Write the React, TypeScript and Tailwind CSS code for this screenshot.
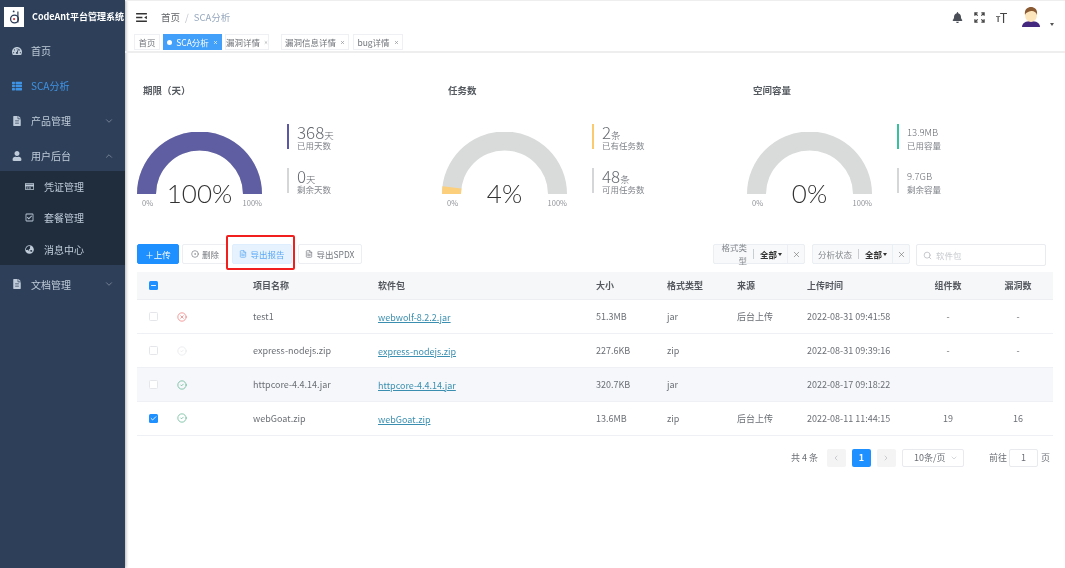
import type { ReactNode } from "react";
import { ChevronDown, ChevronUp, ChevronLeft, ChevronRight, CircleCheck, CircleX, CircleDot, FileText, Search, X, Check, Minus } from "lucide-react";
import { FaTachometerAlt, FaThList, FaFileAlt, FaUser, FaRegCreditCard, FaRegCheckSquare, FaGlobeAsia, FaBell } from "react-icons/fa";

const FONT = "font-['Noto_Sans_CJK_SC','Noto_Sans',sans-serif]";

function SideItem({ icon, label, active, arrow }: { icon: ReactNode; label: string; active?: boolean; arrow?: "up" | "down" }) {
  return (
    <div className={`flex h-[35px] items-center pl-3 text-[10px] ${active ? "text-[#3f93e6]" : "text-[#bfcbd9]"}`}>
      <span className="flex w-[19px] shrink-0 text-[10px]">{icon}</span>
      <span>{label}</span>
      {arrow === "down" && <ChevronDown className="ml-auto mr-[11px] size-[10px] text-[#7f8c9c]" />}
      {arrow === "up" && <ChevronUp className="ml-auto mr-[11px] size-[10px] text-[#7f8c9c]" />}
    </div>
  );
}

function SubItem({ icon, label }: { icon: ReactNode; label: string }) {
  return (
    <div className="flex h-[31.3px] items-center pl-[25px] text-[10px] text-[#bfcbd9]">
      <span className="flex w-[19px] shrink-0 text-[9px]">{icon}</span>
      <span>{label}</span>
    </div>
  );
}

function Sidebar() {
  return (
    <aside className="flex w-[125px] shrink-0 flex-col bg-[#2e4059] shadow-[1px_0_3px_rgba(0,0,0,0.3)]">
      <div className="flex h-[33px] items-center pl-1">
        <div className="flex size-5 items-center justify-center bg-white">
          <svg viewBox="0 0 20 20" className="size-[17px]">
            <circle cx="10" cy="13" r="4.6" fill="none" stroke="#2c3a55" strokeWidth="1.5" />
            <path d="M14 4v13" stroke="#2c3a55" strokeWidth="1.4" />
            <circle cx="9.5" cy="13" r="1.3" fill="#d9363e" />
            <circle cx="9" cy="4" r="1.1" fill="#2c3a55" />
          </svg>
        </div>
        <span className="ml-[8px] whitespace-nowrap text-[9px] font-bold text-white">CodeAnt平台管理系统</span>
      </div>
      <SideItem icon={<FaTachometerAlt />} label="首页" />
      <SideItem icon={<FaThList />} label="SCA分析" active />
      <SideItem icon={<FaFileAlt />} label="产品管理" arrow="down" />
      <SideItem icon={<FaUser />} label="用户后台" arrow="up" />
      <div className="-mt-[2px] bg-[#1f2d3d]">
        <SubItem icon={<FaRegCreditCard />} label="凭证管理" />
        <SubItem icon={<FaRegCheckSquare />} label="套餐管理" />
        <SubItem icon={<FaGlobeAsia />} label="消息中心" />
      </div>
      <div className="pt-[2px]">
        <SideItem icon={<FaFileAlt />} label="文档管理" arrow="down" />
      </div>
    </aside>
  );
}

function Header() {
  return (
    <header className="flex h-[33px] items-center border-t border-[#eeeeee] pl-[11px] pr-[11px]">
      <svg viewBox="0 0 12 10" className="h-[9px] w-[11px] text-[#333]">
        <path d="M0 .8h12M0 5h7M0 9.2h12" stroke="currentColor" strokeWidth="1.5" />
        <path d="M12 3 9 5l3 2z" fill="currentColor" />
      </svg>
      <span className="ml-[14px] text-[9.5px] text-[#606266]">首页</span>
      <span className="mx-[5px] text-[9.5px] text-[#c0c4cc]">/</span>
      <span className="text-[9.5px] text-[#97a8be]">SCA分析</span>
      <div className="ml-auto flex items-center">
        <FaBell className="size-[11px] text-[#4a4f57]" />
        <svg viewBox="0 0 12 12" className="ml-[11px] size-[11px] text-[#444]" fill="none" stroke="currentColor" strokeWidth="1.4">
          <path d="M1 4V1h3M1 1l3 3M8 1h3v3M11 1 8 4M1 8v3h3M1 11l3-3M8 11h3V8M11 11 8 8" />
        </svg>
        <svg viewBox="0 0 12 12" className="ml-[11px] size-[11px] text-[#444]" fill="currentColor">
          <path d="M4.5 1H12v1.2H8.9V12H7.6V2.2H4.5z" />
          <path d="M0 4.5h4.6v1H2.9V11H1.7V5.5H0z" />
        </svg>
        <svg viewBox="0 0 20 22" className="ml-[14px] h-[22px] w-5">
          <path d="M1 21c0-4 4-6 9-6s9 2 9 6z" fill="#44277f" />
          <ellipse cx="10" cy="9" rx="6" ry="7" fill="#fde5bb" />
          <path d="M4 9c-1-6 3-8 6-8s7 2 6 8c-1-3-3-4-5-4S5 6 4 9z" fill="#8a5a33" />
        </svg>
        <span className="ml-[9px] mt-[14px] h-0 w-0 border-x-[2.5px] border-t-[3px] border-x-transparent border-t-[#555]" />
      </div>
    </header>
  );
}

const tags = [
  { label: "首页", cls: "w-[26px] ml-[9px]" },
  { label: "SCA分析", cls: "w-[59px] ml-[3px]", active: true },
  { label: "漏洞详情", cls: "w-[44px] ml-[3px]", close: true },
  { label: "漏洞信息详情", cls: "w-[68px] ml-[12px]", close: true },
  { label: "bug详情", cls: "w-[50px] ml-[4px]", close: true },
];

function TagsBar() {
  return (
    <div className="flex h-[20px] items-start border-b-[2px] border-[#eeeeee] pt-[1px]">
      {tags.map((t) => (
        <div
          key={t.label}
          className={`flex h-[16px] items-center justify-center gap-[4px] whitespace-nowrap border text-[8.5px] ${t.cls} ${
            t.active ? "border-[#42a0fa] bg-[#42a0fa] text-white" : "border-[#eef0f3] bg-white text-[#707479]"
          }`}
        >
          {t.active && <span className="size-[5px] rounded-full bg-white" />}
          {t.label}
          {(t.active || t.close) && <X className={`size-[5px] ${t.active ? "text-white" : "text-[#8a8d92]"}`} strokeWidth={3} />}
        </div>
      ))}
    </div>
  );
}

function arcPath(pct: number) {
  const cx = 62.5;
  const cy = 62;
  const a = Math.PI * (1 - pct / 100);
  const ox = cx + 62.5 * Math.cos(a);
  const oy = cy - 62.5 * Math.sin(a);
  const ix = cx + 43.5 * Math.cos(a);
  const iy = cy - 43.5 * Math.sin(a);
  return `M0 ${cy}A62.5 62.5 0 0 1 ${ox} ${oy}L${ix} ${iy}A43.5 43.5 0 0 0 19 ${cy}Z`;
}

function Stat({ value, unit, label, color, small }: { value: string; unit?: string; label: string; color: string; small?: boolean }) {
  return (
    <div className={`h-[25px] border-l-2 pl-[8px] ${color}`}>
      <div className={`flex h-[15px] items-baseline whitespace-nowrap leading-[15px] text-[#666a70] ${small ? "text-[9.5px] font-light pt-[1px]" : "text-[17px] font-light"}`}>
        {value}
        {unit && <span className="text-[9.5px]">{unit}</span>}
      </div>
      <div className="mt-[1px] whitespace-nowrap text-[8.5px] leading-[10px] text-[#80848a]">{label}</div>
    </div>
  );
}

type GaugeProps = {
  title: string;
  pct: number;
  fill: string;
  barColor: string;
  used: { value: string; unit?: string; label: string };
  left: { value: string; unit?: string; label: string };
  small?: boolean;
};

function Gauge({ title, pct, fill, barColor, used, left, small }: GaugeProps) {
  return (
    <div className="w-[305px]">
      <div className="h-[12px] pl-[6px] text-[9.5px] font-bold leading-[12px] text-[#555a60]">{title}</div>
      <div className="mt-[28px] flex">
        <div className="relative w-[125px] pt-[8px]">
          <svg viewBox="0 0 125 62" className="h-[62px] w-[125px]">
            <path d={arcPath(100)} fill="#d9dbda" />
            {pct > 0 && <path d={arcPath(pct)} fill={fill} />}
          </svg>
          <div className="absolute left-0 right-0 top-[51px] text-center font-['Lato',sans-serif] text-[26px] font-light leading-[36px] text-[#333]">{pct}%</div>
          <div className="mt-[4px] flex justify-between px-[5px] text-[7.5px] leading-[10px] text-[#909399]">
            <span>0%</span>
            <span className="-mr-[5px]">100%</span>
          </div>
        </div>
        <div className="ml-[25px] flex flex-col gap-[19px]">
          <Stat {...used} color={barColor} small={small} />
          <Stat {...left} color="border-[#d5d6d8]" small={small} />
        </div>
      </div>
    </div>
  );
}

function ActionButton({ children, cls }: { children: ReactNode; cls: string }) {
  return <button className={`flex h-[20px] items-center justify-center gap-[3px] rounded-[2px] border text-[8.5px] ${cls}`}>{children}</button>;
}

function Filter({ label, cls }: { label: string; cls: string }) {
  return (
    <div className={`flex h-[20px] items-center rounded-[2px] border border-[#ebeef2] bg-[#f8f9fa] text-[8.5px] ${cls}`}>
      <span className="flex-1 pr-[6px] text-right text-[#84888e]">{label}</span>
      <span className="h-[10px] border-l border-[#c9ccd1]" />
      <span className="ml-[6px] font-bold text-[#333]">全部</span>
      <span className="ml-[1px] h-0 w-0 border-x-[2.5px] border-t-[3px] border-x-transparent border-t-[#333]" />
      <span className="ml-[5px] flex h-full w-[17px] items-center justify-center border-l border-[#ebeef2]">
        <X className="size-[9px] text-[#666]" strokeWidth={1.5} />
      </span>
    </div>
  );
}

const GRID = "grid grid-cols-[36px_80px_125px_218px_71px_70px_70px_106px_70px_70px] items-center";

type Row = {
  name: string;
  size: string;
  fmt: string;
  source: string;
  time: string;
  comps: string;
  vulns: string;
  status: "fail" | "idle" | "ok";
  checked?: boolean;
  hover?: boolean;
  h: string;
};

const rows: Row[] = [
  { name: "test1", pkg: "webwolf-8.2.2.jar", size: "51.3MB", fmt: "jar", source: "后台上传", time: "2022-08-31 09:41:58", comps: "-", vulns: "-", status: "fail", h: "h-[34px]" },
  { name: "express-nodejs.zip", pkg: "express-nodejs.zip", size: "227.6KB", fmt: "zip", source: "", time: "2022-08-31 09:39:16", comps: "-", vulns: "-", status: "idle", h: "h-[34px]" },
  { name: "httpcore-4.4.14.jar", pkg: "httpcore-4.4.14.jar", size: "320.7KB", fmt: "jar", source: "", time: "2022-08-17 09:18:22", comps: "", vulns: "", status: "ok", hover: true, h: "h-[34px]" },
  { name: "webGoat.zip", pkg: "webGoat.zip", size: "13.6MB", fmt: "zip", source: "后台上传", time: "2022-08-11 11:44:15", comps: "19", vulns: "16", status: "ok", checked: true, h: "h-[33.5px]" },
] as (Row & { pkg: string })[];

function StatusIcon({ status }: { status: Row["status"] }) {
  if (status === "fail") return <CircleX className="size-[10px] text-[#ee6a6a]" strokeWidth={1.6} />;
  if (status === "idle") return <CircleCheck className="size-[10px] text-[#e2e4e8]" strokeWidth={1.6} />;
  return <CircleCheck className="size-[10px] text-[#4fae85]" strokeWidth={1.6} />;
}

function Table() {
  return (
    <div className="mt-[8px] text-[9px] text-[#6b6f75]">
      <div className={`${GRID} h-[28px] border-b border-[#eceef2] bg-[#f6f7f8] font-bold text-[#55595f]`}>
        <div className="pl-[12px]">
          <span className="flex size-[9px] items-center justify-center rounded-[1.5px] bg-[#1e90ff]">
            <Minus className="size-[7px] text-white" strokeWidth={3} />
          </span>
        </div>
        <div />
        <div>项目名称</div>
        <div>软件包</div>
        <div>大小</div>
        <div>格式类型</div>
        <div>来源</div>
        <div>上传时间</div>
        <div className="text-center">组件数</div>
        <div className="text-center">漏洞数</div>
      </div>
      {(rows as (Row & { pkg: string })[]).map((r) => (
        <div key={r.name} className={`${GRID} ${r.h} border-b border-[#eef0f5] ${r.hover ? "bg-[#f5f7fa]" : "bg-white"}`}>
          <div className="pl-[12px]">
            {r.checked ? (
              <span className="flex size-[9px] items-center justify-center rounded-[1.5px] bg-[#1e90ff]">
                <Check className="size-[7px] text-white" strokeWidth={3} />
              </span>
            ) : (
              <span className="block size-[9px] rounded-[1.5px] border border-[#e4e6ea] bg-white" />
            )}
          </div>
          <div className="pl-[4px]">
            <StatusIcon status={r.status} />
          </div>
          <div>{r.name}</div>
          <div className="pt-[2px] text-[#3a8fb0] underline">{r.pkg}</div>
          <div>{r.size}</div>
          <div>{r.fmt}</div>
          <div>{r.source}</div>
          <div className="whitespace-nowrap">{r.time}</div>
          <div className="text-center">{r.comps}</div>
          <div className="text-center">{r.vulns}</div>
        </div>
      ))}
    </div>
  );
}

function Pagination() {
  return (
    <div className="mt-[13px] flex h-[19px] items-center justify-end pr-[3px] text-[9px] text-[#6b6f75]">
      <span>共 4 条</span>
      <span className="ml-[9px] flex h-[18px] w-[19px] items-center justify-center rounded-[2px] bg-[#f4f4f5]">
        <ChevronLeft className="size-[8px] text-[#b5b8bd]" />
      </span>
      <span className="ml-[6px] flex h-[18px] w-[19px] items-center justify-center rounded-[2px] bg-[#1e90ff] font-bold text-white">1</span>
      <span className="ml-[6px] flex h-[18px] w-[19px] items-center justify-center rounded-[2px] bg-[#f4f4f5]">
        <ChevronRight className="size-[8px] text-[#b5b8bd]" />
      </span>
      <span className="ml-[6px] flex h-[18px] w-[62px] items-center rounded-[2px] border border-[#e8eaee] pl-[11px]">
        10条/页
        <ChevronDown className="ml-auto mr-[5px] size-[8px] text-[#c0c4cc]" />
      </span>
      <span className="ml-[25px]">前往</span>
      <span className="ml-[2px] flex h-[18px] w-[29px] items-center justify-center rounded-[2px] border border-[#e8eaee]">1</span>
      <span className="ml-[3px]">页</span>
    </div>
  );
}

export default function App() {
  return (
    <div className={`flex h-[568px] w-[1065px] overflow-hidden bg-white blur-[0.3px] ${FONT}`}>
      <Sidebar />
      <main className="flex min-w-0 flex-1 flex-col">
        <Header />
        <TagsBar />
        <div className="px-3 pt-[31px]">
          <div className="flex h-[160px]">
            <Gauge
              title="期限（天）"
              pct={100}
              fill="#5f5ea3"
              barColor="border-[#5a58a6]"
              used={{ value: "368", unit: "天", label: "已用天数" }}
              left={{ value: "0", unit: "天", label: "剩余天数" }}
            />
            <Gauge
              title="任务数"
              pct={4}
              fill="#fbcf7c"
              barColor="border-[#fbc96f]"
              used={{ value: "2", unit: "条", label: "已有任务数" }}
              left={{ value: "48", unit: "条", label: "可用任务数" }}
            />
            <Gauge
              title="空间容量"
              pct={0}
              fill="#36c3a0"
              barColor="border-[#35c29f]"
              used={{ value: "13.9MB", label: "已用容量" }}
              left={{ value: "9.7GB", label: "剩余容量" }}
              small
            />
          </div>
          <div className="flex h-[20px] items-start">
            <ActionButton cls="w-[42px] border-[#1e90ff] bg-[#1e90ff] text-white">＋上传</ActionButton>
            <ActionButton cls="ml-[3px] w-[46px] border-[#eceef2] bg-white text-[#73777d]">
              <CircleDot className="size-[8px]" />
              删除
            </ActionButton>
            <div className="relative ml-[4px]">
              <ActionButton cls="w-[60px] border-[#deeeff] bg-[#e6f2fe] text-[#5aa9f5]">
                <FileText className="size-[8px]" />
                导出报告
              </ActionButton>
              <span className="absolute -bottom-[6px] -left-[6px] -right-[3px] -top-[9px] rounded-[2px] border-2 border-[#f21f1f]" />
            </div>
            <ActionButton cls="ml-[6px] w-[64px] border-[#eceef2] bg-white text-[#73777d]">
              <FileText className="size-[8px]" />
              导出SPDX
            </ActionButton>
            <div className="ml-auto flex items-start">
              <Filter label="格式类型" cls="w-[92px]" />
              <Filter label="分析状态" cls="ml-[7px] w-[98px]" />
              <div className="ml-[6px] mr-[7px] flex h-[22px] w-[130px] items-center rounded-[2px] border border-[#e9ebef] pl-[6px] text-[8.5px] text-[#c7cace]">
                <Search className="size-[9px] text-[#b5b8bd]" />
                <span className="ml-[4px]">软件包</span>
              </div>
            </div>
          </div>
          <Table />
          <Pagination />
        </div>
      </main>
    </div>
  );
}
